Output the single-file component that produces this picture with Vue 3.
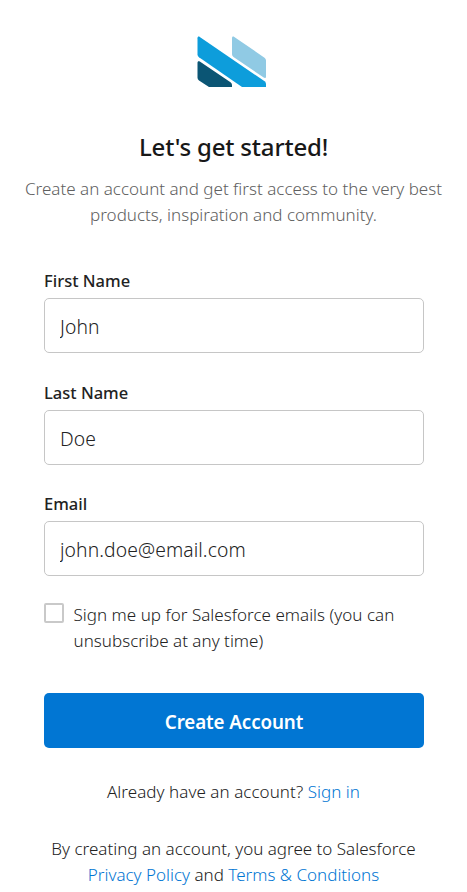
<script setup>
import { reactive, ref } from 'vue'

const fields = reactive([
  { id: 'first', label: 'First Name', type: 'text', value: 'John' },
  { id: 'last', label: 'Last Name', type: 'text', value: 'Doe' },
  { id: 'email', label: 'Email', type: 'email', value: 'john.doe@email.com' },
])
const subscribed = ref(false)
</script>

<template>
  <main class="page">
    <svg class="logo" viewBox="0 0 70 52" aria-hidden="true">
      <path fill="#0d9ddb" d="M.5 2.2C.5.6 1.5.2 2.8 1L67.600 45.300Q69 46.300 69 48V51H45L2 21.300Q.5 20.200.5 18.500Z" />
      <path fill="#90cae4" d="M35 2.200C35 .6 36 .2 37.300 1L67.500 21.700Q69 22.800 69 24.500V40.500C69 42 68 42.500 66.700 41.600L36.500 21Q35 20 35 18.300Z" />
      <path fill="#0b5574" d="M.5 26.800C.5 25.200 1.500 24.800 2.800 25.600L33.500 46.300Q35 47.300 35 49V51H12L2 44.500Q.5 43.500.5 41.800Z" />
    </svg>
    <h1 class="title">Let's get started!</h1>
    <p class="intro">
      Create an account and get first access to the very best<br />
      products, inspiration and community.
    </p>
    <form class="form" @submit.prevent>
      <div v-for="field in fields" :key="field.id" class="field">
        <label class="label" :for="field.id">{{ field.label }}</label>
        <input :id="field.id" v-model="field.value" class="input" :type="field.type" />
      </div>
      <label class="consent">
        <input v-model="subscribed" class="box" type="checkbox" />
        <span class="consent-text">Sign me up for Salesforce emails (you can<br />unsubscribe at any time)</span>
      </label>
      <button class="submit" type="submit">Create Account</button>
    </form>
    <p class="signin">Already have an account? <a class="link" href="#">Sign in</a></p>
    <p class="terms">
      By creating an account, you agree to Salesforce<br />
      <a class="link" href="#">Privacy Policy</a> and <a class="link" href="#">Terms &amp; Conditions</a>
    </p>
  </main>
</template>

<style>
body {
  background: #fff;
  overflow: hidden;
}
</style>

<style scoped>
.page {
  box-sizing: border-box;
  width: 467px;
  height: 892px;
  padding-top: 36px;
  overflow: hidden;
  display: flex;
  flex-direction: column;
  align-items: center;
  color: #222;
  font-family: "Noto Sans", "Open Sans", sans-serif;
  font-size: 17px;
  font-weight: 340;
  line-height: 26px;
  letter-spacing: 0;
  text-align: center;
}
.page p,
.page h1 {
  margin: 0;
  white-space: nowrap;
}
.logo {
  width: 70px;
  height: 52px;
  margin-right: 3px;
}
.page .title {
  margin-top: 43px;
  font-size: 24px;
  font-weight: 470;
  line-height: 32px;
  letter-spacing: -0.18px;
  color: #181818;
}
.page .intro {
  margin-top: 13px;
  color: #606060;
}
.form {
  width: 380px;
  margin: 41px 0 0 1px;
  text-align: left;
}
.field {
  height: 111.5px;
}
.label {
  display: block;
  height: 29px;
  font-weight: 500;
  font-size: 16.5px;
  line-height: 23px;
}
.input {
  display: block;
  box-sizing: border-box;
  width: 380px;
  height: 55px;
  padding: 2px 15px 0;
  border: 1px solid #c6c6c6;
  border-radius: 5px;
  background: #fff;
  color: #222;
  font: inherit;
  font-size: 19.3px;
  letter-spacing: 0.1px;
  outline: none;
}
.consent {
  display: flex;
  gap: 9.5px;
  height: 89px;
  white-space: nowrap;
}
.consent-text {
  margin-top: -2px;
  letter-spacing: 0.02px;
}
.box {
  appearance: none;
  box-sizing: border-box;
  flex: none;
  width: 20px;
  height: 20px;
  margin: -1px 0 0;
  border: 2px solid #c9c9c9;
  border-radius: 2px;
  background: #fff;
}
.submit {
  display: block;
  width: 380px;
  height: 55px;
  padding: 3px 0 0;
  border: 0;
  border-radius: 5px;
  background: #0176d3;
  color: #fff;
  font: inherit;
  font-size: 18.8px;
  letter-spacing: -0.1px;
  font-weight: 600;
}
.page .signin {
  margin-top: 31px;
  letter-spacing: 0.05px;
}
.page .terms {
  margin-top: 31px;
}
.link {
  color: #0176d3;
  text-decoration: none;
}
</style>
